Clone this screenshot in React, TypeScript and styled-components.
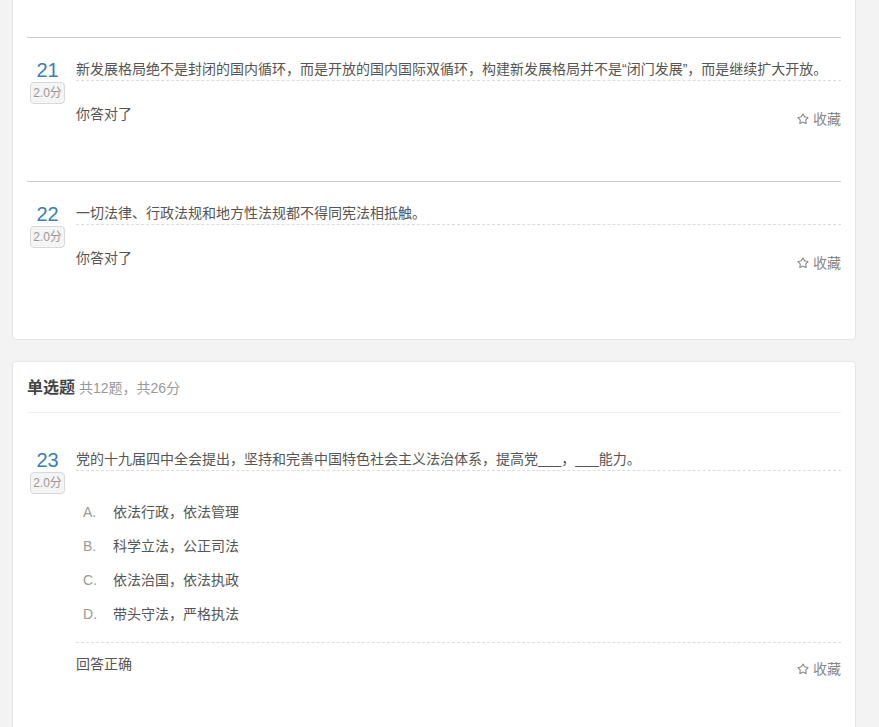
import React from 'react';
import styled, { createGlobalStyle } from 'styled-components';
import { Star } from 'lucide-react';

const GlobalStyle = createGlobalStyle`
  html, body {
    margin: 0;
    padding: 0;
    background: #f3f3f3;
  }
  body {
    font-family: "Liberation Sans", "Noto Sans CJK SC", sans-serif;
    color: #555;
    font-size: 14px;
  }
`;

const Page = styled.div`
  width: 844px;
  padding-left: 12px;
  height: 727px;
  overflow: hidden;
`;

const Card = styled.div<{ $cut?: boolean }>`
  background: #fff;
  border: 1px solid #e6e6e6;
  border-radius: 4px;
  padding: 14px 14px 14px;
  margin-bottom: 21px;
  ${(p) => p.$cut && `
    border-top: none;
    border-radius: 0 0 4px 4px;
    padding-top: 37px;
  `}
`;

const SectionHead = styled.div`
  display: flex;
  align-items: baseline;
  line-height: 24px;
  padding-bottom: 12px;
  border-bottom: 1px solid #eeeeee;
  margin-bottom: 15px;
`;

const SectionTitle = styled.span`
  font-size: 16px;
  font-weight: bold;
  color: #444;
`;

const SectionMeta = styled.span`
  font-size: 14px;
  color: #999;
  margin-left: 4px;
`;

const Question = styled.div<{ $divided?: boolean }>`
  display: flex;
  padding: 20px 0 51px;
  border-top: ${(p) => (p.$divided ? '1px solid #cfcfcf' : 'none')};
`;

const Side = styled.div`
  width: 41px;
  margin-right: 8px;
  display: flex;
  flex-direction: column;
  align-items: center;
`;

const Num = styled.div`
  font-size: 20px;
  line-height: 24px;
  color: #3a7fb1;
  font-family: "Liberation Sans", Arial, sans-serif;
`;

const Score = styled.div`
  font-size: 12px;
  line-height: 20px;
  color: #999;
  background: #f4f4f4;
  border: 1px solid #d8d8d8;
  border-radius: 4px;
  padding: 0 2px;
`;

const Body = styled.div`
  flex: 1;
`;

const Stem = styled.div`
  line-height: 22px;
  border-bottom: 1px dashed #dcdcdc;
  color: #555;
`;

const Options = styled.ul`
  list-style: none;
  margin: 24px 0 0;
  padding: 0 0 11px;
  border-bottom: 1px dashed #dcdcdc;
`;

const Option = styled.li`
  display: flex;
  padding: 6px 0 6px 7px;
  line-height: 22px;
`;

const Letter = styled.span`
  width: 30px;
  color: #999;
`;

const Footer = styled.div<{ $gap: number }>`
  display: flex;
  justify-content: space-between;
  align-items: flex-start;
  margin-top: ${(p) => p.$gap}px;
  line-height: 22px;
`;

const Result = styled.span`
  color: #555;
`;

const Collect = styled.span`
  display: flex;
  align-items: center;
  gap: 4px;
  color: #888;
  margin-top: 5px;
  cursor: pointer;
`;

type Q = {
  no: number;
  text: string;
  result: string;
  options?: string[];
  divided?: boolean;
};

const QuestionBlock = ({ q }: { q: Q }) => (
  <Question $divided={q.divided}>
    <Side>
      <Num>{q.no}</Num>
      <Score>2.0分</Score>
    </Side>
    <Body>
      <Stem>{q.text}</Stem>
      {q.options && (
        <Options>
          {q.options.map((o, i) => (
            <Option key={o}>
              <Letter>{'ABCD'[i]}.</Letter>
              <span>{o}</span>
            </Option>
          ))}
        </Options>
      )}
      <Footer $gap={q.options ? 10 : 22}>
        <Result>{q.result}</Result>
        <Collect>
          <Star size={12} strokeWidth={2.2} color="#888" />
          收藏
        </Collect>
      </Footer>
    </Body>
  </Question>
);

const judge: Q[] = [
  {
    no: 21,
    text: '新发展格局绝不是封闭的国内循环，而是开放的国内国际双循环，构建新发展格局并不是“闭门发展”，而是继续扩大开放。',
    result: '你答对了',
    divided: true,
  },
  {
    no: 22,
    text: '一切法律、行政法规和地方性法规都不得同宪法相抵触。',
    result: '你答对了',
    divided: true,
  },
];

const single: Q[] = [
  {
    no: 23,
    text: '党的十九届四中全会提出，坚持和完善中国特色社会主义法治体系，提高党___，___能力。',
    result: '回答正确',
    options: ['依法行政，依法管理', '科学立法，公正司法', '依法治国，依法执政', '带头守法，严格执法'],
  },
];

const App = () => (
  <>
    <GlobalStyle />
    <Page>
      <Card $cut>
        {judge.map((q) => (
          <QuestionBlock key={q.no} q={q} />
        ))}
      </Card>
      <Card>
        <SectionHead>
          <SectionTitle>单选题</SectionTitle>
          <SectionMeta>共12题，共26分</SectionMeta>
        </SectionHead>
        {single.map((q) => (
          <QuestionBlock key={q.no} q={q} />
        ))}
      </Card>
    </Page>
  </>
);

export default App;
